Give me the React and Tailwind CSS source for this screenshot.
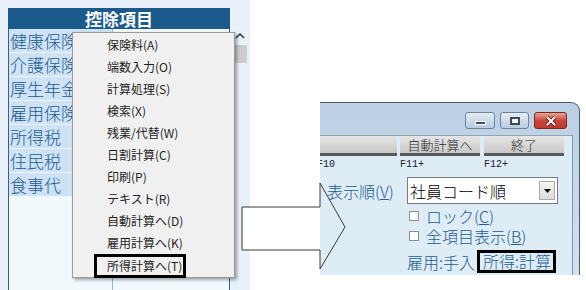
import React from "react";

const rows = ["健康保険", "介護保険", "厚生年金", "雇用保険", "所得税", "住民税", "食事代"];

const menuItems = [
  "保険料(A)",
  "端数入力(O)",
  "計算処理(S)",
  "検索(X)",
  "残業/代替(W)",
  "日割計算(C)",
  "印刷(P)",
  "テキスト(R)",
  "自動計算へ(D)",
  "雇用計算へ(K)",
];

function LeftPanel() {
  return (
    <div className="relative w-[250px] h-[290px] shrink-0 bg-[#e8f1f9] pt-[8px] pl-[8px] flex">
      <div className="w-[222px] flex flex-col">
        <div className="h-[21px] bg-[#1b5a8b] text-white font-bold text-[17px] leading-[21px] text-center">
          控除項目
        </div>
        <div className="flex-1 flex border-l border-r border-[#3d5f7e] bg-[#f2f9fd]">
          <div className="w-[104px] border-r border-[#9fb4c6] flex flex-col">
            {rows.map((r) => (
              <div
                key={r}
                className="h-[24px] bg-[#cde3f5] border-b border-[#eef6fc] pl-[1px] text-[17px] font-light leading-[23px] text-[#1f5a8e] whitespace-nowrap overflow-hidden"
              >
                {r}
              </div>
            ))}
          </div>
          <div className="flex-1" />
        </div>
      </div>
      <div className="w-[16px] ml-[2px] flex flex-col items-center pt-[24px]">
        <svg width="10" height="8" viewBox="0 0 10 8">
          <path d="M1 6 L5 2 L9 6" fill="none" stroke="#333" strokeWidth="1.5" />
        </svg>
        <div className="mt-[5px] w-[14px] h-[18px] bg-[#cdcdcd]" />
      </div>

      <div className="absolute left-[72px] top-[32px] w-[163px] h-[246px] bg-[#f0f0f0] border border-[#9a9a9a] shadow-[2px_2px_3px_rgba(0,0,0,0.35)] pt-[1px] text-[12px] text-[#1e1e1e]">
        {menuItems.map((m) => (
          <div key={m} className="h-[22px] leading-[22px] pl-[34px]">
            {m}
          </div>
        ))}
        <div className="h-[24px] pl-[21px]">
          <span className="inline-block h-[24px] border-[3px] border-black pl-[10px] pr-[1px] leading-[18px]">
            所得計算へ(T)
          </span>
        </div>
      </div>
    </div>
  );
}

function TitleButtons() {
  return (
    <div className="flex items-start gap-[5px] pt-[9px] pr-[12px]">
      <div className="w-[30px] h-[17px] rounded-[3px] border border-[#6f8299] bg-gradient-to-b from-[#e4edf6] to-[#b9cbe0] flex items-center justify-center">
        <div className="w-[11px] h-[4px] bg-[#3c4a5c] border border-white mt-[4px]" />
      </div>
      <div className="w-[29px] h-[17px] rounded-[3px] border border-[#6f8299] bg-gradient-to-b from-[#e4edf6] to-[#b9cbe0] flex items-center justify-center">
        <div className="w-[10px] h-[8px] border-[2px] border-[#3c4a5c] bg-white" />
      </div>
      <div className="w-[33px] h-[17px] rounded-[3px] border border-[#7a2a22] bg-gradient-to-b from-[#e8a290] via-[#c9463a] to-[#c0392f] flex items-center justify-center">
        <svg width="12" height="10" viewBox="0 0 12 10">
          <path d="M2 1 L10 9 M10 1 L2 9" stroke="#3a1410" strokeWidth="3.5" />
          <path d="M2 1 L10 9 M10 1 L2 9" stroke="white" strokeWidth="2" />
        </svg>
      </div>
    </div>
  );
}

function Win() {
  const btn =
    "h-[20px] shrink-0 bg-gradient-to-b from-[#e6e6e6] to-[#c9c9c9] border-b-[3px] border-[#5a5a5a] text-[13px] font-light leading-[17px] text-center text-[#2a2a2a]";
  const label = "text-[16px] leading-[20px] font-light text-[#235a92]";
  return (
    <div className="ml-[70px] mt-[102px] w-[260px] h-[173px] shrink-0 rounded-tr-[9px] border-t border-r border-[#4d5b6b] bg-gradient-to-b from-[#bccfe3] to-[#d3e1ee] flex flex-col overflow-hidden">
      <div className="h-[32px] flex justify-end shrink-0">
        <TitleButtons />
      </div>
      <div className="flex-1 mr-[6px] border-t border-[#8fa2b6] border-r border-r-[#7d98b6] bg-[#deecf6] flex flex-col">
        <div className="flex">
          <div className={`${btn} w-[77px]`} />
          <div className={`${btn} w-[80px] ml-[3px]`}>自動計算へ</div>
          <div className={`${btn} w-[80px] ml-[4px]`}>終了</div>
        </div>
        <div className="flex h-[14px] mt-[2px] text-[10px] leading-[14px] text-[#222] font-[Liberation_Mono,monospace]">
          <span className="w-[80px] -ml-[3px]">F10</span>
          <span className="w-[84px] ml-[3px]">F11+</span>
          <span>F12+</span>
        </div>
        <div className="flex items-center mt-[5px] h-[27px]">
          <span className={`${label} ml-[7px] w-[80px]`}>
            表示順(<span className="underline">V</span>)
          </span>
          <div className="w-[151px] h-[27px] bg-white border border-[#7a7a7a] flex items-center">
            <span className="flex-1 pl-[2px] text-[16px] leading-[20px] font-light text-black">社員コード順</span>
            <div className="w-[16px] h-[19px] mr-[2px] bg-gradient-to-b from-[#f4f4f4] to-[#dcdcdc] border border-[#a8a8a8] flex items-center justify-center">
              <svg width="7" height="4" viewBox="0 0 7 4">
                <path d="M0 0 L7 0 L3.5 4 Z" fill="#000" />
              </svg>
            </div>
          </div>
        </div>
        <div className="ml-[89px] mt-[2px] flex flex-col">
          <div className="flex items-center h-[20px]">
            <div className="w-[10px] h-[10px] bg-white border border-[#8c8c8c]" />
            <span className={`${label} ml-[7px]`}>
              ロック(<span className="underline">C</span>)
            </span>
          </div>
          <div className="flex items-center h-[20px]">
            <div className="w-[10px] h-[10px] bg-white border border-[#8c8c8c]" />
            <span className={`${label} ml-[7px]`}>
              全項目表示(<span className="underline">B</span>)
            </span>
          </div>
          <div className="flex items-center h-[23px] mt-[4px] -ml-[2px]">
            <span className={`${label} w-[70px]`}>雇用:手入</span>
            <span className="h-[23px] border-[3px] border-black pl-[3px] pr-[2px] text-[16px] leading-[16px] font-light text-[#235a92]">
              所得:計算
            </span>
          </div>
        </div>
      </div>
    </div>
  );
}

export default function App() {
  return (
    <div className="relative w-[586px] h-[290px] bg-white overflow-hidden flex font-[Noto_Sans_CJK_JP,sans-serif]">
      <LeftPanel />
      <Win />
      <svg className="absolute left-0 top-0" width="586" height="290">
        <rect x="242" y="207" width="78" height="43" fill="white" />
        <polygon
          points="242,207 320,207 320,183 345,227 320,269 320,250 242,250"
          fill="none"
          stroke="#3a3a3a"
          strokeWidth="1"
        />
      </svg>
    </div>
  );
}
